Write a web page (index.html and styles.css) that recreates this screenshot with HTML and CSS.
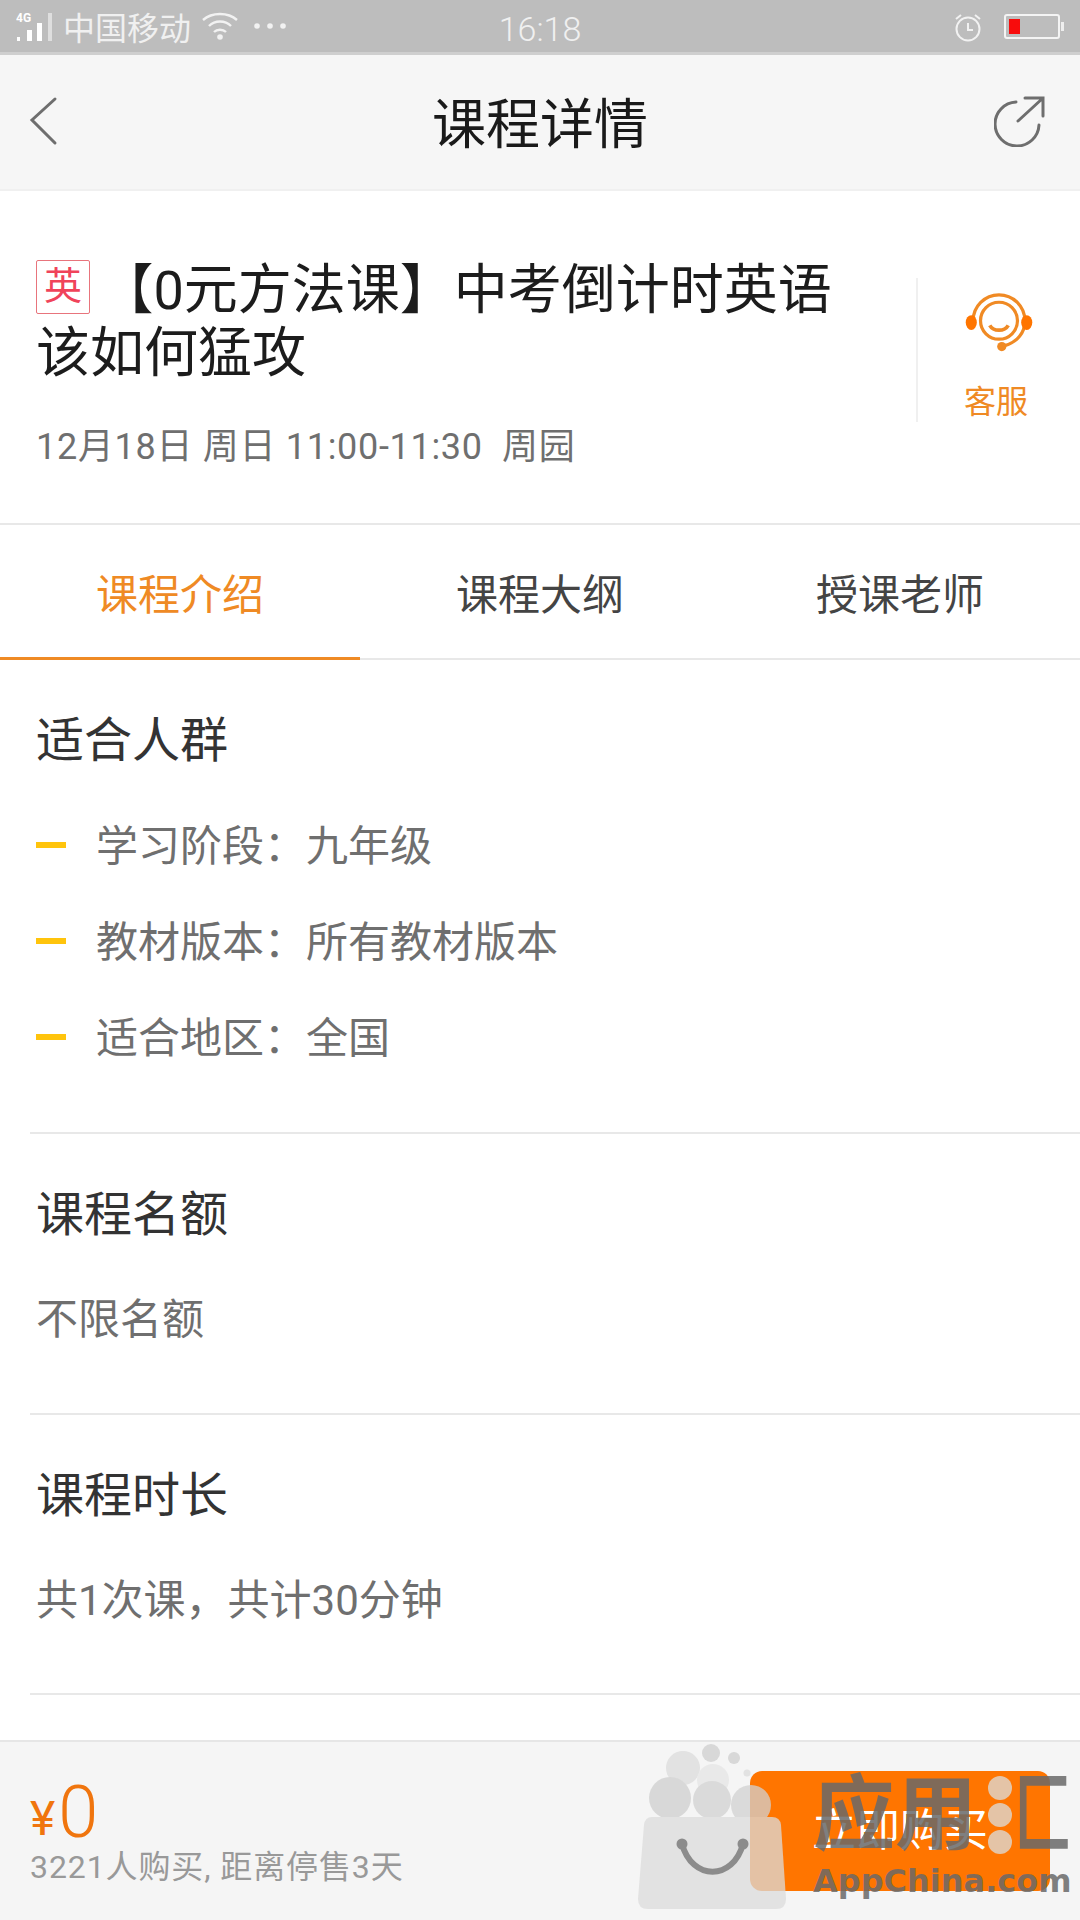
FILE: index.html
```html
<!DOCTYPE html>
<html lang="zh-CN">
<head>
    <meta charset="UTF-8">
    <meta name="viewport" content="width=device-width, initial-scale=1.0">
    <title>课程详情</title>
    <link rel="stylesheet" href="styles.css">
</head>
<body>
    <div class="page">
        <div class="status-bar">
            <div class="status-left">
                <svg class="signal" width="38" height="32" viewBox="0 0 38 32">
                    <text x="0" y="12" font-size="12" font-weight="700" font-family="Roboto" fill="#fff">4G</text>
                    <rect x="1" y="27" width="3" height="4" fill="#fff"/>
                    <rect x="11" y="20" width="5" height="11" fill="#fff"/>
                    <rect x="21" y="13" width="5" height="18" fill="#fff"/>
                    <rect x="32" y="3" width="4" height="28" fill="#dedede"/>
                </svg>
                <span class="carrier">中国移动</span>
                <svg class="wifi" width="36" height="28" viewBox="0 0 36 28" fill="none" stroke="#f2f2f2" stroke-width="2.4">
                    <path d="M1 8 C10 0 26 0 35 8"/>
                    <path d="M7 14 C13 8 23 8 29 14"/>
                    <path d="M12 20 C15 17 21 17 24 20"/>
                    <circle cx="18" cy="25" r="2.8" fill="#f2f2f2" stroke="none"/>
                </svg>
                <svg class="more" width="34" height="8" viewBox="0 0 34 8" fill="#f2f2f2">
                    <circle cx="4" cy="4" r="2.8"/>
                    <circle cx="17" cy="4" r="2.8"/>
                    <circle cx="30" cy="4" r="2.8"/>
                </svg>
            </div>
            <div class="status-time">16:18</div>
            <div class="status-right">
                <svg class="alarm" width="30" height="30" viewBox="0 0 30 30" fill="none" stroke="#f2f2f2" stroke-width="2">
                    <circle cx="15" cy="16" r="11.5"/>
                    <path d="M15 10 V17 H20"/>
                    <path d="M3 6 L8 2 M22 2 L27 6"/>
                </svg>
                <div class="battery">
                    <div class="battery-level"></div>
                </div>
            </div>
        </div>

        <div class="nav-bar">
            <svg width="32" height="52" viewBox="0 0 32 52" fill="none" stroke="#6e6e6e" stroke-width="3" stroke-linecap="round">
                <path d="M27 4 L4 25 L27 48"/>
            </svg>
            <h1>课程详情</h1>
            <svg class="nav-share" width="52" height="52" viewBox="0 0 52 52" fill="none" stroke="#6e6e6e" stroke-width="3" stroke-linecap="round">
                <path d="M22 7 A22 22 0 1 0 45 30"/>
                <path d="M24 26 L49 3 M31 3 H49 V21"/>
            </svg>
        </div>

        <div class="course-head">
            <div class="course-info">
                <h2><span class="subject-tag">英</span> 【0元方法课】中考倒计时英语该如何猛攻</h2>
                <p class="course-meta">12月18日 周日 11:00-11:30&nbsp; 周园</p>
            </div>
            <div class="service">
                <svg width="72" height="66" viewBox="0 0 72 66" fill="none" stroke="#f08a24" stroke-width="3.5">
                    <path d="M8 30 A28 28 0 0 1 64 30 C64 43 56 53 42 57"/>
                    <circle cx="36" cy="30" r="20"/>
                    <path d="M26 35 C30 42 42 42 46 35" stroke-width="4"/>
                    <ellipse cx="6" cy="32" rx="6" ry="8" fill="#ff7500" stroke="none"/>
                    <ellipse cx="66" cy="32" rx="6" ry="8" fill="#ff7500" stroke="none"/>
                    <circle cx="39" cy="58" r="5" fill="#f08a24" stroke="none"/>
                </svg>
                <span>客服</span>
            </div>
        </div>

        <div class="tabs">
            <div class="tab active">课程介绍</div>
            <div class="tab">课程大纲</div>
            <div class="tab">授课老师</div>
        </div>

        <section class="block block-people">
            <h3>适合人群</h3>
            <ul class="bullets">
                <li>学习阶段：九年级</li>
                <li>教材版本：所有教材版本</li>
                <li>适合地区：全国</li>
            </ul>
        </section>
        <section class="block">
            <h3>课程名额</h3>
            <p>不限名额</p>
        </section>
        <section class="block">
            <h3>课程时长</h3>
            <p>共1次课，共计30分钟</p>
        </section>

        <div class="buy-bar">
            <div class="buy-info">
                <div class="price"><span class="yen">¥</span>0</div>
                <div class="sold">3221人购买, 距离停售3天</div>
            </div>
            <div class="buy-btn">立即购买</div>
        </div>

        <!-- 水印 -->
        <div class="watermark">
            <svg class="wm-bag" width="148" height="166" viewBox="0 0 148 166" fill="#dcdcdc">
                <circle cx="73" cy="10" r="9" fill="#cfcfcf"/>
                <circle cx="96" cy="15" r="6" fill="#cfcfcf"/>
                <circle cx="109" cy="30" r="3.5"/>
                <circle cx="45" cy="25" r="17"/>
                <circle cx="75" cy="37" r="16" fill="#e6e6e6"/>
                <circle cx="32" cy="55" r="21" fill="#cfcfcf"/>
                <circle cx="74" cy="57" r="19" fill="#d2d2d2"/>
                <circle cx="113" cy="62" r="20" fill="#d2d2d2"/>
                <path d="M14 74 H134 Q142 74 143 82 L148 156 Q148 166 138 166 H10 Q0 166 0 156 L6 82 Q7 74 14 74 Z"/>
                <path d="M44 101 C54 138 95 138 105 101" fill="none" stroke="#6a6a6a" stroke-width="6"/>
                <circle cx="44" cy="101" r="5.5" fill="#6a6a6a"/>
                <circle cx="105" cy="101" r="5.5" fill="#6a6a6a"/>
            </svg>
            <div class="wm-text">
                <div class="wm-name">
                    <span>应用</span>
                    <span class="wm-drops"><i></i><i></i><i></i></span>
                    <span class="wm-last">匚</span>
                </div>
                <div class="wm-site">AppChina.com</div>
            </div>
        </div>
    </div>
</body>
</html>
```

FILE: styles.css
```css
* {
    box-sizing: border-box;
    margin: 0;
    padding: 0;
}

html, body {
    width: 1080px;
    height: 1920px;
    overflow: hidden;
}

body {
    font-family: Roboto, 'Noto Sans CJK SC', sans-serif;
    background: #fff;
    color: #333;
}

.page {
    position: relative;
    display: flex;
    flex-direction: column;
    width: 1080px;
    height: 1920px;
    overflow: hidden;
}

/* 状态栏 */
.status-bar {
    display: grid;
    grid-template-columns: 1fr auto 1fr;
    align-items: center;
    height: 55px;
    padding: 0 16px;
    background: #bdbdbd;
    border-bottom: 3px solid #cfcfcf;
    color: #f0f0f0;
}

.status-left {
    display: flex;
    align-items: center;
}

.carrier {
    margin-left: 9px;
    font-size: 32px;
}

.wifi {
    margin-left: 11px;
}

.more {
    margin-left: 15px;
}

.status-time {
    padding-top: 5px;
    font-size: 34px;
    font-weight: 300;
}

.status-right {
    display: flex;
    align-items: center;
    justify-content: flex-end;
    gap: 21px;
    padding-right: 4px;
}

.alarm {
    margin-top: 3px;
}

.battery {
    position: relative;
    width: 56px;
    height: 25px;
    padding: 3px;
    border: 2px solid #f4f4f4;
    border-radius: 3px;
}

.battery::after {
    content: '';
    position: absolute;
    top: 6px;
    right: -6px;
    width: 3px;
    height: 9px;
    background: #eee;
}

.battery-level {
    width: 11px;
    height: 100%;
    background: #f80c0c;
}

/* 导航栏 */
.nav-bar {
    display: grid;
    grid-template-columns: 1fr auto 1fr;
    align-items: center;
    height: 136px;
    padding: 0 28px 3px;
    background: #f6f6f6;
    border-bottom: 2px solid #f0f0f0;
}

.nav-share {
    justify-self: end;
    margin-right: 6px;
}

.nav-bar h1 {
    font-size: 54px;
    font-weight: 400;
    color: #1a1a1a;
}

/* 课程标题 */
.course-head {
    display: flex;
    align-items: center;
    height: 334px;
    padding: 9px 0 0 36px;
    border-bottom: 2px solid #e8e8e8;
}

.course-info {
    flex: 1;
    padding: 5px 50px 0 0;
}

.course-info h2 {
    font-size: 54px;
    font-weight: 400;
    line-height: 63px;
    color: #1c1c1c;
}

.subject-tag {
    display: inline-block;
    width: 54px;
    height: 54px;
    margin-right: -4px;
    border: 1px solid #e8747c;
    border-radius: 2px;
    font-size: 38px;
    line-height: 50px;
    text-align: center;
    vertical-align: 10px;
    color: #f0435a;
}

.course-meta {
    margin-top: 32px;
    font-size: 36px;
    letter-spacing: 0.7px;
    color: #6f6f6f;
}

.service {
    display: flex;
    flex-direction: column;
    align-items: center;
    width: 164px;
    height: 144px;
    margin-bottom: 23px;
    padding-top: 15px;
    border-left: 2px solid #f0f0f0;
    font-size: 32px;
    color: #ef8a24;
}

.service span {
    margin: 28px 6px 0 0;
    line-height: 40px;
}

/* tab */
.tabs {
    display: flex;
    height: 135px;
    border-bottom: 2px solid #e8e8e8;
}

.tab {
    flex: 1;
    padding-top: 8px;
    font-size: 42px;
    line-height: 126px;
    text-align: center;
    color: #444;
}

.tab.active {
    height: 135px;
    border-bottom: 3px solid #ef8a24;
    color: #ef8a24;
}

/* 内容块 */
.block {
    height: 280.5px;
    margin-left: 30px;
    padding: 49px 0 0 6px;
    border-bottom: 2px solid #e8e8e8;
}

.block-people {
    height: 474px;
}

.block h3 {
    font-size: 48px;
    font-weight: 400;
    line-height: 64px;
    color: #333;
}

.block p {
    margin-top: 44px;
    font-size: 42px;
    line-height: 58px;
    color: #6f6f6f;
}

.bullets {
    margin-top: 21px;
    list-style: none;
}

.bullets li {
    display: flex;
    align-items: center;
    gap: 30px;
    height: 96px;
    font-size: 42px;
    color: #6f6f6f;
}

.bullets li::before {
    content: '';
    width: 30px;
    height: 6px;
    margin-top: 6px;
    background: #ffc40c;
}

/* 底部购买栏 */
.buy-bar {
    position: absolute;
    bottom: 0;
    left: 0;
    display: flex;
    align-items: center;
    justify-content: space-between;
    width: 1080px;
    height: 180px;
    padding: 0 30px;
    background: #f5f5f5;
    border-top: 2px solid #e6e6e6;
}

.buy-info {
    padding-top: 8px;
}

.price {
    font-size: 72px;
    font-weight: 300;
    line-height: 57px;
    color: #f0750e;
}

.yen {
    margin-right: 3px;
    font-size: 48px;
    font-weight: 400;
    vertical-align: 2px;
}

.sold {
    font-size: 32px;
    letter-spacing: 0.9px;
    line-height: 40px;
    color: #999;
}

.buy-btn {
    width: 300px;
    height: 120px;
    border-radius: 12px;
    background: #ff7500;
    font-size: 44px;
    line-height: 120px;
    text-align: center;
    color: #fff;
}

/* 水印 */
.watermark {
    position: absolute;
    top: 1743px;
    left: 638px;
    display: flex;
    pointer-events: none;
}

.wm-bag {
    opacity: 0.75;
}

.wm-text {
    position: absolute;
    top: 22px;
    left: 175px;
    width: 270px;
    color: rgba(105, 105, 105, 0.85);
}

.wm-name {
    display: flex;
    align-items: center;
    height: 100px;
    font-size: 82px;
    font-weight: 700;
    line-height: 100px;
}

.wm-drops {
    display: flex;
    flex-direction: column;
    gap: 3px;
    margin: 0 0 0 11px;
}

.wm-drops i {
    display: block;
    width: 24px;
    height: 24px;
    border-radius: 50%;
    background: rgba(225, 205, 185, 0.9);
}

.wm-last {
    display: block;
    width: 50px;
    font-size: 88px;
    transform: scaleX(0.66);
    transform-origin: left center;
    margin-left: 2px;
}

.wm-site {
    margin-top: -2px;
    font-family: 'DejaVu Sans', sans-serif;
    font-size: 32px;
    font-weight: 700;
    line-height: 36px;
    white-space: nowrap;
}
```
